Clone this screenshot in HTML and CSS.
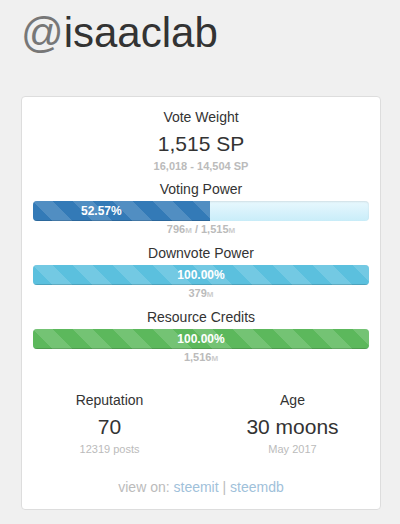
FILE: index.html
```html
<!DOCTYPE html>
<html lang="en">
  <head>
    <meta charset="UTF-8" />
    <meta name="viewport" content="width=device-width, initial-scale=1.0" />
    <title>@isaaclab</title>
    <link rel="stylesheet" href="styles.css">
  </head>
  <body>
    <div class="page">
      <h1 class="account"><span class="at">@</span>isaaclab</h1>

      <div class="card">
        <!-- Peso del voto -->
        <div class="stat">
          <div class="stat-label">Vote Weight</div>
          <div class="stat-value">1,515 SP</div>
          <div class="stat-sub">16,018 - 14,504 SP</div>
        </div>

        <!-- Barras -->
        <div class="meter">
          <div class="meter-label">Voting Power</div>
          <div class="bar">
            <div class="bar-fill bar-primary bar-offset" style="width: 52.57%">52.57%</div>
          </div>
          <div class="meter-sub">796<small>M</small> / 1,515<small>M</small></div>
        </div>

        <div class="meter">
          <div class="meter-label">Downvote Power</div>
          <div class="bar">
            <div class="bar-fill bar-info" style="width: 100%">100.00%</div>
          </div>
          <div class="meter-sub">379<small>M</small></div>
        </div>

        <div class="meter">
          <div class="meter-label">Resource Credits</div>
          <div class="bar">
            <div class="bar-fill bar-success" style="width: 100%">100.00%</div>
          </div>
          <div class="meter-sub">1,516<small>M</small></div>
        </div>

        <!-- Reputación y edad -->
        <div class="stats-row">
          <div class="stat">
            <div class="stat-label">Reputation</div>
            <div class="stat-value">70</div>
            <div class="stat-sub">12319 posts</div>
          </div>
          <div class="stat">
            <div class="stat-label">Age</div>
            <div class="stat-value">30 moons</div>
            <div class="stat-sub">May 2017</div>
          </div>
        </div>

        <div class="links">
          view on: <a href="#">steemit</a> | <a href="#">steemdb</a>
        </div>
      </div>
    </div>
  </body>
</html>
```

FILE: styles.css
```css
/* General */
body {
  margin: 0;
  padding: 0;
  background-color: #f0f0f0;
  font-family: "Liberation Sans", Arial, sans-serif;
  color: #333;
}

.page {
  padding: 10px 19px 0 21px;
}

.account {
  margin: 0 0 40px;
  font-size: 42px;
  line-height: 46px;
  font-weight: normal;
  color: #333;
}

.account .at {
  color: #777;
}

/* Tarjeta */
.card {
  background-color: #fff;
  border: 1px solid #ddd;
  border-radius: 4px;
  padding: 10px 11px 12px;
  text-align: center;
}

.stat-label,
.meter-label {
  font-size: 14px;
  line-height: 20px;
}

.stat-value {
  margin-top: 2px;
  font-size: 21px;
  line-height: 30px;
}

.stat-sub,
.meter-sub {
  font-size: 11px;
  line-height: 14px;
  font-weight: bold;
  color: #bbb;
}

.meter-sub small {
  font-size: 8px;
  line-height: 0;
  color: #ccc;
}

.meter {
  margin-top: 6px;
}

.meter + .meter {
  margin-top: 7px;
}

/* Barras de progreso */
.bar {
  margin-top: 2px;
  height: 20px;
  border-radius: 4px;
  overflow: hidden;
  background: linear-gradient(#e8f8fe, #c9edf9);
  box-shadow: inset 0 1px 2px rgba(0, 0, 0, 0.1);
}

.bar-fill {
  box-sizing: border-box;
  height: 100%;
  font-size: 12px;
  line-height: 20px;
  font-weight: bold;
  color: #fff;
  background-image: linear-gradient(45deg, rgba(255, 255, 255, 0.15) 25%, transparent 25%, transparent 50%, rgba(255, 255, 255, 0.15) 50%, rgba(255, 255, 255, 0.15) 75%, transparent 75%, transparent);
  background-size: 40px 40px;
  box-shadow: inset 0 -1px 0 rgba(0, 0, 0, 0.15);
}

.bar-offset {
  padding-right: 40px;
}

.bar-primary {
  background-color: #337ab7;
}

.bar-info {
  background-color: #5bc0de;
}

.bar-success {
  background-color: #5cb85c;
}

.meter-sub {
  margin-top: 1px;
}

/* Fila inferior */
.stats-row {
  display: grid;
  grid-template-columns: 1fr 1fr;
  margin: 26px -15px 0;
}

.stats-row .stat-sub {
  font-weight: normal;
}

.links {
  margin-top: 21px;
  font-size: 14px;
  line-height: 20px;
  color: #bbb;
}

.links a {
  color: #9fc1da;
  text-decoration: none;
}
```
